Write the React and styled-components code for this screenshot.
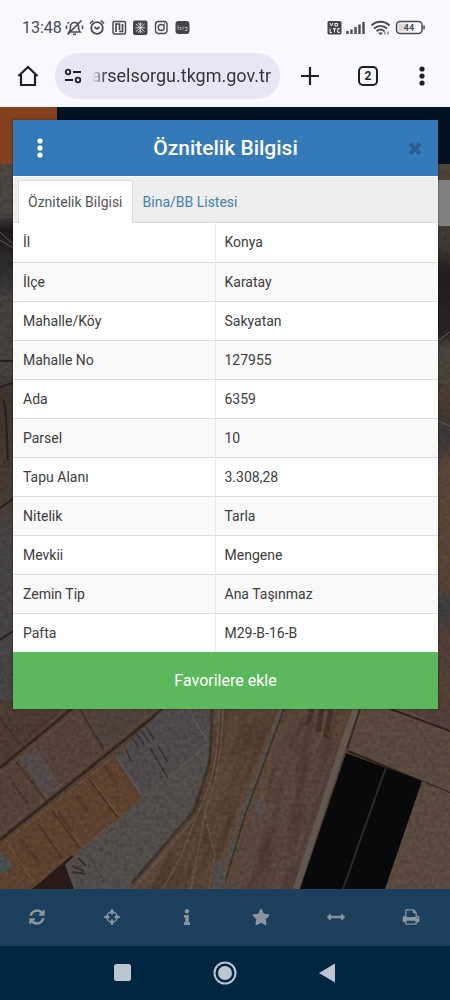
import { useState } from "react";
import styled, { createGlobalStyle } from "styled-components";
import { FaInfo, FaStar } from "react-icons/fa";

const GlobalStyle = createGlobalStyle`
  * {
    box-sizing: border-box;
  }
  body {
    margin: 0;
    font-family: Roboto, "Liberation Sans", sans-serif;
    background: #01263f;
  }
  button,
  input {
    font-family: inherit;
    border: 0;
    padding: 0;
    background: none;
  }
  svg {
    display: block;
    flex-shrink: 0;
  }
`;

const Screen = styled.div`
  min-height: 100vh;
  display: flex;
  flex-direction: column;
`;

const StatusBar = styled.div`
  height: 44px;
  padding: 12px 25px 0 22px;
  display: flex;
  align-items: center;
  justify-content: space-between;
  background: #f9f8fe;
  color: #4a4a50;
  font-size: 16px;
  line-height: 20px;
`;

const StatusGroup = styled.div`
  display: flex;
  align-items: center;
  gap: 2px;
`;

const Clock = styled.span`
  width: 40px;
`;

const BrowserBar = styled.div`
  height: 63px;
  padding: 0 20px 0 16px;
  display: flex;
  align-items: center;
  background: #f9f8fe;
  color: #1f1f24;
`;

const AddressBox = styled.div`
  flex: 1;
  min-width: 0;
  height: 46px;
  margin: 0 18px 0 15px;
  padding: 0 9px;
  display: flex;
  align-items: center;
  gap: 10px;
  border-radius: 23px;
  background: #e7e6f2;
`;

const AddressInput = styled.input`
  flex: 1;
  min-width: 0;
  height: 30px;
  direction: rtl;
  font-size: 18px;
  color: #35353d;
  outline: none;
  mask-image: linear-gradient(to right, transparent 0, #000 14px);
`;

const BarButton = styled.button`
  width: ${({ $size }) => $size || 24}px;
  height: 24px;
  margin-left: ${({ $gap }) => $gap || 0}px;
  flex-shrink: 0;
  display: flex;
  align-items: center;
  justify-content: center;
  color: inherit;
`;

const TabCount = styled.span`
  width: 20px;
  height: 20px;
  border: 2px solid #1f1f24;
  border-radius: 5px;
  font-size: 12px;
  font-weight: 700;
  line-height: 16px;
  text-align: center;
`;

const Stage = styled.main`
  flex: 1;
  display: grid;
  position: relative;
  overflow: hidden;
`;

const Backdrop = styled.div`
  position: absolute;
  inset: 0;
  display: flex;
  flex-direction: column;
`;

const SiteHeader = styled.div`
  height: 57px;
  flex-shrink: 0;
  background: linear-gradient(to right, #82401e 57px, #011322 57px);
`;

const MapDrawing = styled.svg`
  flex: 1;
  width: 100%;
  min-height: 0;
`;

const Dialog = styled.section`
  position: relative;
  align-self: start;
  margin: 13px 12px 180px 13px;
  background: #fff;
  box-shadow: 0 0 2px rgba(0, 0, 0, 0.5);
`;

const DialogHeader = styled.header`
  height: 56px;
  display: grid;
  grid-template-columns: 54px 1fr 54px;
  align-items: center;
  background: #357ab8;
  color: #fff;
`;

const DialogTitle = styled.h1`
  margin: 0;
  font-size: 21px;
  font-weight: 500;
  line-height: 24px;
  text-align: center;
`;

const HeaderButton = styled.button`
  width: 20px;
  height: 32px;
  margin-right: ${({ $dim }) => ($dim ? 13 : 0)}px;
  justify-self: ${({ $dim }) => ($dim ? "end" : "center")};
  display: flex;
  align-items: center;
  justify-content: center;
  color: ${({ $dim }) => ($dim ? "#2b5f8f" : "#fff")};
`;

const Tabs = styled.div`
  height: 47px;
  padding: 3px 5px 0;
  display: flex;
  background: #eee;
  border-top: 1px solid #fff;
  border-bottom: 1px solid #ddd;
`;

const Tab = styled.button`
  height: 43px;
  padding: 0 9px;
  border: 1px solid ${({ $active }) => ($active ? "#ddd" : "transparent")};
  border-bottom: 0;
  background: ${({ $active }) => ($active ? "#fff" : "transparent")};
  color: ${({ $active }) => ($active ? "#555" : "#4280b5")};
  font-size: 14px;
  line-height: 20px;
`;

const InfoTable = styled.table`
  width: 100%;
  border-collapse: collapse;
  table-layout: fixed;
  font-size: 14px;
  line-height: 20px;
  color: #3c3c3c;
  tr {
    height: 39px;
    background: #fff;
    border-bottom: 1px solid #ddd;
  }
  tr:nth-child(even) {
    background: #f9f9f9;
  }
  tr:last-child {
    border-bottom: 0;
  }
  th,
  td {
    padding: 0 9px;
    text-align: left;
    font-weight: 400;
  }
  th {
    width: 202px;
    padding-left: 10px;
    border-right: 1px solid #e8e8e8;
  }
`;

const FavoriteButton = styled.button`
  width: 100%;
  height: 57px;
  display: block;
  background: #5cb85c;
  color: #fff;
  font-size: 16px;
`;

const Toolbar = styled.nav`
  height: 57px;
  padding: 0 2px 2px 0;
  display: grid;
  grid-template-columns: repeat(6, 1fr);
  background: #1c3f5e;
`;

const SystemNav = styled.nav`
  height: 54px;
  padding: 0 16%;
  display: grid;
  grid-template-columns: repeat(3, 1fr);
  background: #01263f;
`;

const IconButton = styled.button`
  display: flex;
  align-items: center;
  justify-content: center;
  color: ${({ $light }) => ($light ? "#bbc6d2" : "#8b959d")};
`;

const rows = [
  ["İl", "Konya"],
  ["İlçe", "Karatay"],
  ["Mahalle/Köy", "Sakyatan"],
  ["Mahalle No", "127955"],
  ["Ada", "6359"],
  ["Parsel", "10"],
  ["Tapu Alanı", "3.308,28"],
  ["Nitelik", "Tarla"],
  ["Mevkii", "Mengene"],
  ["Zemin Tip", "Ana Taşınmaz"],
  ["Pafta", "M29-B-16-B"],
];

const paths = {
  refresh:
    "M1639 1056q0 5-1 7-64 268-268 434.5t-478 166.5q-146 0-282.5-55t-243.5-157l-129 129q-19 19-45 19t-45-19-19-45v-448q0-26 19-45t45-19h448q26 0 45 19t19 45-19 45l-137 137q71 66 161 102t187 36q134 0 250-65t186-179q11-17 53-117 8-23 30-23h192q13 0 22.5 9.5t9.5 22.5zm25-800v448q0 26-19 45t-45 19h-448q-26 0-45-19t-19-45 19-45l138-138q-148-137-349-137-134 0-250 65t-186 179q-11 17-53 117-8 23-30 23h-199q-13 0-22.5-9.5t-9.5-22.5v-7q65-268 270-434.5t480-166.5q146 0 284 55.5t245 156.5l130-129q19-19 45-19t45 19 19 45z",
  crosshairs:
    "M1325 1024h-109q-26 0-45-19t-19-45v-128q0-26 19-45t45-19h109q-32-108-112.5-188.5t-188.5-112.5v109q0 26-19 45t-45 19h-128q-26 0-45-19t-19-45v-109q-108 32-188.5 112.5t-112.5 188.5h109q26 0 45 19t19 45v128q0 26-19 45t-45 19h-109q32 108 112.5 188.5t188.5 112.5v-109q0-26 19-45t45-19h128q26 0 45 19t19 45v109q108-32 188.5-112.5t112.5-188.5zm339-192v128q0 26-19 45t-45 19h-143q-37 161-154.5 278.5t-278.5 154.5v143q0 26-19 45t-45 19h-128q-26 0-45-19t-19-45v-143q-161-37-278.5-154.5t-154.5-278.5h-143q-26 0-45-19t-19-45v-128q0-26 19-45t45-19h143q37-161 154.5-278.5t278.5-154.5v-143q0-26 19-45t45-19h128q26 0 45 19t19 45v143q161 37 278.5 154.5t154.5 278.5h143q26 0 45 19t19 45z",
  arrows:
    "M1792 896q0 26-19 45l-256 256q-19 19-45 19t-45-19-19-45v-128h-1024v128q0 26-19 45t-45 19-45-19l-256-256q-19-19-19-45t19-45l256-256q19-19 45-19t45 19 19 45v128h1024v-128q0-26 19-45t45-19 45 19l256 256q19 19 19 45z",
  print:
    "M448 1536h896v-256h-896v256zm0-640h896v-384h-160q-40 0-68-28t-28-68v-160h-640v640zm1152 64q0-26-19-45t-45-19-45 19-19 45 19 45 45 19 45-19 19-45zm128 0v416q0 13-9.5 22.5t-22.5 9.5h-224v160q0 40-28 68t-68 28h-960q-40 0-68-28t-28-68v-160h-224q-13 0-22.5-9.5t-9.5-22.5v-416q0-79 56.5-135.5t135.5-56.5h64v-544q0-40 28-68t68-28h672q40 0 88 20t76 48l152 152q28 28 48 76t20 88v256h64q79 0 135.5 56.5t56.5 135.5z",
  times:
    "M1490 1322q0 40-28 68l-136 136q-28 28-68 28t-68-28l-294-294-294 294q-28 28-68 28t-68-28l-136-136q-28-28-28-68t28-68l294-294-294-294q-28-28-28-68t28-68l136-136q28-28 68-28t68 28l294 294 294-294q28-28 68-28t68 28l136 136q28 28 28 68t-28 68l-294 294 294 294q28 28 28 68z",
};

function Glyph({ name, size = 18 }) {
  return (
    <svg width={size} height={size} viewBox="0 0 1792 1792" fill="currentColor">
      <path d={paths[name]} />
    </svg>
  );
}

function Dots() {
  return (
    <svg width="6" height="20" viewBox="0 0 6 20" fill="currentColor">
      <circle cx="3" cy="3" r="2.6" />
      <circle cx="3" cy="10" r="2.6" />
      <circle cx="3" cy="17" r="2.6" />
    </svg>
  );
}

function StatusLeftIcons() {
  return (
    <svg width="126" height="18" viewBox="64 19 126 18" fill="none" stroke="#4a4a50">
      {/* muted bell */}
      <path
        d="M69 32h11c-1.500-1.500-1.500-3.500-1.500-5.500a4 4 0 0 0-8 0c0 2 0 4-1.500 5.500zM73 34.300h3M67.500 34.500L81.500 20.500M66.500 25.500v3.500M69 22l-1.500 1.500M82.500 25.500v3.500"
        strokeWidth="1.600"
      />
      {/* alarm */}
      <circle cx="97" cy="28" r="5.800" strokeWidth="1.800" />
      <path d="M94.500 27l2.500 2 2.500-2M90 23.500l3.200-3M104 23.500l-3.200-3" strokeWidth="1.700" />
      {/* nfc */}
      <rect x="113" y="21.500" width="12.500" height="12.500" rx="1.500" strokeWidth="1.500" />
      <path d="M116 32v-8h3.500v6M122.500 24v7.500h-3.500" strokeWidth="1.700" />
      {/* dark app badge */}
      <rect x="133" y="20.500" width="14.500" height="14.500" rx="2" fill="#45454b" stroke="none" />
      <path
        d="M140.250 22.500v10.500M136 24l8.500 7.500M144.500 24l-8.500 7.500M135.500 27.750h9.500M138 23l2.250 2 2.250-2M138 32.500l2.250-2 2.250 2"
        stroke="#e6e5ec"
        strokeWidth="0.900"
      />
      {/* camera */}
      <rect x="155.500" y="21.500" width="11.500" height="12" rx="3" strokeWidth="1.400" />
      <circle cx="161.250" cy="27.500" r="3" strokeWidth="1.400" />
      <circle cx="164.500" cy="24" r="0.700" fill="#4a4a50" stroke="none" />
      {/* label badge */}
      <rect x="175.500" y="21" width="14" height="13" rx="3" fill="#45454b" stroke="none" />
      <path
        d="M178 25.500v4M179.500 27.500h1.500v2h-1.500M183 26.500v3M184.500 27.500h2.500v3h-2"
        stroke="#b9b9c0"
        strokeWidth="0.900"
      />
    </svg>
  );
}

function StatusRightIcons() {
  return (
    <svg width="98" height="18" viewBox="327 19 98 18" fill="none" stroke="#4a4a50">
      <rect x="327.500" y="21" width="14" height="13.500" rx="1.500" fill="#45454b" stroke="none" />
      <path
        d="M330 23l1.500 3 1.500-3M335 23.500h2.500v2.500H335zM330 28.500v4h2M333 28.700h3M334.500 29v3.500M340 28.700h-2.300v3.600h2.300"
        stroke="#f0f0f5"
        strokeWidth="1"
      />
      <path d="M347.500 31v3M351.500 29.500v4.500M355.500 27v7M359.500 24.500v9.500M363.500 22v12" strokeWidth="2.400" />
      <path
        d="M371.500 25.500c5-5 13-5 18 0M374 28.500c4-3.500 9-3.500 13 0M376.500 31.200c2.500-2 5.500-2 8 0"
        strokeWidth="1.900"
      />
      <path d="M378.800 33h3.500l-1.800 1.600zM385 34.500v-3M388 31.500v3" fill="#4a4a50" strokeWidth="1" />
      <rect x="396.500" y="21.500" width="25.500" height="12" rx="3.500" strokeWidth="1.500" />
      <path d="M398.500 23.500h8v8h-8z" fill="#d8d8de" stroke="none" />
      <path d="M424 25.500v4" strokeWidth="1.600" />
      <text
        x="409"
        y="31"
        textAnchor="middle"
        fontSize="9"
        fontWeight="700"
        fill="#4a4a50"
        stroke="none"
      >
        44
      </text>
    </svg>
  );
}

function SatelliteMap() {
  return (
    <MapDrawing viewBox="0 164 450 725" preserveAspectRatio="xMidYMax slice" aria-hidden="true">
      <defs>
        <linearGradient id="leftEdge" x1="0" y1="164" x2="0" y2="709" gradientUnits="userSpaceOnUse">
          <stop offset="0" stopColor="#514a43" />
          <stop offset="0.090" stopColor="#4b4846" />
          <stop offset="0.120" stopColor="#1f1c1d" />
          <stop offset="0.200" stopColor="#333132" />
          <stop offset="0.250" stopColor="#474442" />
          <stop offset="0.380" stopColor="#48443f" />
          <stop offset="0.430" stopColor="#423630" />
          <stop offset="0.620" stopColor="#4c3f38" />
          <stop offset="0.680" stopColor="#494647" />
          <stop offset="1" stopColor="#4b4849" />
        </linearGradient>
        <linearGradient id="rightEdge" x1="0" y1="164" x2="0" y2="709" gradientUnits="userSpaceOnUse">
          <stop offset="0" stopColor="#54483a" />
          <stop offset="0.150" stopColor="#413c35" />
          <stop offset="0.200" stopColor="#261c1f" />
          <stop offset="0.310" stopColor="#2d2224" />
          <stop offset="0.340" stopColor="#4f4941" />
          <stop offset="0.450" stopColor="#493e33" />
          <stop offset="0.500" stopColor="#3d393c" />
          <stop offset="0.560" stopColor="#604a39" />
          <stop offset="0.770" stopColor="#5b4637" />
          <stop offset="0.810" stopColor="#3f4142" />
          <stop offset="0.870" stopColor="#55403a" />
          <stop offset="1" stopColor="#594437" />
        </linearGradient>
        <filter id="soil" x="0" y="0" width="100%" height="100%" colorInterpolationFilters="sRGB">
          <feTurbulence type="fractalNoise" baseFrequency="0.25" numOctaves="3" seed="8" />
          <feColorMatrix values="0 0 0 0 0.08  0 0 0 0 0.05  0 0 0 0 0.04  1.600 0 0 0 -0.500" />
        </filter>
        <filter id="streaks" x="0" y="0" width="100%" height="100%" colorInterpolationFilters="sRGB">
          <feTurbulence type="fractalNoise" baseFrequency="0.09 0.018" numOctaves="3" seed="3" />
          <feColorMatrix values="0 0 0 0 0.230  0 0 0 0 0.130  0 0 0 0 0.090  2.200 0 0 0 -0.850" />
        </filter>
        <clipPath id="plough">
          <path d="M222 700h136l-14 50-45 139h-60l24-80 20-100h-5l-20 52-24 58-24 70h-60l40-75z" />
        </clipPath>
      </defs>
      <rect y="164" width="450" height="725" fill="#584539" />
      <rect y="164" width="20" height="545" fill="url(#leftEdge)" />
      <rect x="430" y="164" width="20" height="545" fill="url(#rightEdge)" />
      <path
        d="M0 238l13 12M0 245l13 9M0 361h13M0 387l13-4M4 400c4 20 2 40 4 60M0 508l13-9M0 640l13-9"
        stroke="#292120"
        strokeWidth="2"
        fill="none"
      />
      <path d="M0 232l13 12M0 240l13 8M436 342l14-10M436 420l14 6" stroke="#625e5d" strokeWidth="1" />

      {/* small fields on the left */}
      <path d="M0 700h72L0 768z" fill="#4f3f35" />
      <path d="M72 709h91L0 838v-70z" fill="#594639" />
      <path d="M80 712l80-3-58 45z" fill="#53463c" />
      <path d="M0 718l20 26M80 710l24 40M15 760l32 42" stroke="#453529" strokeWidth="1.500" />
      <path d="M12 782l16 22M28 735l30-22" stroke="#4b382c" strokeWidth="2" />
      <path d="M20 758l17-9 24 36-15 14z" fill="#55504f" />
      <path d="M0 768l75-62M0 840l163-131" stroke="#38291f" strokeWidth="3" />
      <path d="M0 774l80-66M0 834l152-122" stroke="#66513f" strokeWidth="1" />

      {/* orange brown strip */}
      <path d="M3 843l110-86 29 42L32 889H0v-42z" fill="#624632" />
      <path d="M52 811l30 40M88 778l30 40M38 824l24 34" stroke="#4a3525" strokeWidth="1.500" />
      <path
        d="M8 844l26 38M5 842l107-84M35 886l105-85M56 812l28 36M92 780l27 36"
        stroke="#745740"
        strokeWidth="1"
        fill="none"
      />
      <path d="M20 838l20 26M58 812l14 20M104 766l14 18M76 796l12 16" stroke="#593b2a" strokeWidth="4" />
      <path d="M0 852l14 14-12 8-2-1z" fill="#4c5552" />
      <path d="M32 889l40-34 14 34z" fill="#2c1c19" />

      {/* grey plots */}
      <path d="M163 709h50l-8 38-63 52-27-42z" fill="#534e4f" />
      <path d="M213 706l-3 55-16 50-67 78H74l-9-24 17-17 62-50 60-50z" fill="#56524f" />
      <path d="M116 757l26 38M142 798l62-50M192 716l14 24" stroke="#6c6461" strokeWidth="1" />
      <path
        d="M131 736l8 12M136 733l8 12M141 730l8 12M146 727l8 12M126 750l6 12M150 748l18 30M158 746l10 16"
        stroke="#3a3534"
        strokeWidth="1.500"
      />
      <path d="M72 866l12 5M78 858l8 8M72 872l14 2" stroke="#38332f" strokeWidth="2" />
      <path d="M88 852l16 30" stroke="#47423f" strokeWidth="1" />
      <path d="M212 706l-2 55-16 50-62 72" stroke="#40392f" strokeWidth="3" fill="none" />

      {/* ploughed land in the middle */}
      <path d="M216 700h142l-14 50-45 139H130l66-76 15-50z" fill="#5f4b3c" />
      <path d="M285 720l55 28-45 141h-67z" fill="#5e4c41" />
      <g clipPath="url(#plough)">
        <g transform="rotate(20 280 800)">
          <rect x="120" y="640" width="320" height="320" filter="url(#streaks)" opacity="0.400" />
        </g>
      </g>
      <path d="M313 706l-6 20M332 706l-7 32M322 706l-4 26" stroke="#4a3329" strokeWidth="5" />
      <path
        d="M219 706c-1 34-2 66-18 100l-20 50-18 33M223 706c0 36-4 70-18 106l-14 77M196 816l-62 73M205 815l10 40-6 34"
        stroke="#6d5646"
        strokeWidth="1.500"
        fill="none"
      />
      <path d="M283 706l-20 53-22 58-22 72" stroke="#58524a" strokeWidth="6" fill="none" />
      <path d="M285 706l-18 49-22 60-22 74" stroke="#35342b" strokeWidth="1.500" fill="none" />
      <path d="M256 798l8-6 4 20-14 5z" fill="#5b5250" />
      <path d="M211 866l14-8v31h-12z" fill="#56524e" />

      {/* tan fields on the right */}
      <path d="M358 700h92v95l-102-44z" fill="#5e4e40" />
      <path d="M388 700h62v32z" fill="#55433a" />
      <path d="M388 708l62 23M348 751l102 42" stroke="#30231d" strokeWidth="2" />
      <path d="M421 781l29 12v96h-65z" fill="#5f4e42" />
      <rect y="164" width="450" height="725" filter="url(#soil)" opacity="0.250" />

      {/* black plots with the road beside them */}
      <path d="M346 753l76 28-37 108h-85z" fill="#08090b" />
      <path d="M386 767l-43 122" stroke="#2e2824" strokeWidth="2" />
      <path d="M357 706l-16 46-45 137" stroke="#62574f" strokeWidth="6" fill="none" />
      <path d="M361 706l-14 43" stroke="#352a24" strokeWidth="2" />
      <path d="M352 706l-17 47-47 136" stroke="#4b3e34" strokeWidth="1" fill="none" />
      <rect x="430" y="180" width="20" height="46" fill="#808080" />
    </MapDrawing>
  );
}

export default function App() {
  const [tab, setTab] = useState("info");

  return (
    <Screen>
      <GlobalStyle />
      <StatusBar>
        <StatusGroup>
          <Clock>13:48</Clock>
          <StatusLeftIcons />
        </StatusGroup>
        <StatusRightIcons />
      </StatusBar>
      <BrowserBar>
        <BarButton aria-label="Ana sayfa">
          <svg width="24" height="24" viewBox="0 0 24 24" fill="none" stroke="currentColor">
            <path d="M2.500 12L12 3l9.500 9M5 10v11h14V10" strokeWidth="2.200" />
          </svg>
        </BarButton>
        <AddressBox>
          <svg width="18" height="16" viewBox="0 0 18 16" fill="none" stroke="currentColor">
            <circle cx="4" cy="4" r="2.300" strokeWidth="1.800" />
            <circle cx="14" cy="12" r="2.300" strokeWidth="1.800" />
            <path d="M9 4h8M1 12h8" strokeWidth="1.800" />
          </svg>
          <AddressInput aria-label="Adres" defaultValue="arselsorgu.tkgm.gov.tr" />
        </AddressBox>
        <BarButton aria-label="Yeni sekme">
          <svg width="20" height="20" viewBox="0 0 20 20" stroke="currentColor">
            <path d="M10 1v18M1 10h18" strokeWidth="2.200" />
          </svg>
        </BarButton>
        <BarButton $gap={34} aria-label="Sekmeler">
          <TabCount>2</TabCount>
        </BarButton>
        <BarButton $gap={34} $size={16} aria-label="Menü">
          <Dots />
        </BarButton>
      </BrowserBar>

      <Stage>
        <Backdrop>
          <SiteHeader />
          <SatelliteMap />
        </Backdrop>
        <Dialog role="dialog" aria-labelledby="dialog-title">
          <DialogHeader>
            <HeaderButton aria-label="Seçenekler">
              <Dots />
            </HeaderButton>
            <DialogTitle id="dialog-title">Öznitelik Bilgisi</DialogTitle>
            <HeaderButton $dim aria-label="Kapat">
              <Glyph name="times" />
            </HeaderButton>
          </DialogHeader>
          <Tabs role="tablist">
            <Tab role="tab" $active={tab === "info"} onClick={() => setTab("info")}>
              Öznitelik Bilgisi
            </Tab>
            <Tab role="tab" $active={tab === "list"} onClick={() => setTab("list")}>
              Bina/BB Listesi
            </Tab>
          </Tabs>
          <InfoTable>
            <tbody>
              {rows.map(([label, value]) => (
                <tr key={label}>
                  <th scope="row">{label}</th>
                  <td>{value}</td>
                </tr>
              ))}
            </tbody>
          </InfoTable>
          <FavoriteButton>Favorilere ekle</FavoriteButton>
        </Dialog>
      </Stage>

      <Toolbar>
        <IconButton aria-label="Yenile">
          <Glyph name="refresh" />
        </IconButton>
        <IconButton aria-label="Konum">
          <Glyph name="crosshairs" />
        </IconButton>
        <IconButton aria-label="Bilgi">
          <FaInfo size={16} />
        </IconButton>
        <IconButton aria-label="Favoriler">
          <FaStar size={18} />
        </IconButton>
        <IconButton aria-label="Ölç">
          <Glyph name="arrows" />
        </IconButton>
        <IconButton aria-label="Yazdır">
          <Glyph name="print" />
        </IconButton>
      </Toolbar>
      <SystemNav>
        <IconButton $light aria-label="Son uygulamalar">
          <svg width="18" height="18" fill="currentColor">
            <rect width="17" height="17" rx="2.500" />
          </svg>
        </IconButton>
        <IconButton $light aria-label="Ana ekran">
          <svg width="24" height="24" fill="none" stroke="currentColor">
            <circle cx="12" cy="12" r="10.500" strokeWidth="2" />
            <circle cx="12" cy="12" r="7" fill="currentColor" stroke="none" />
          </svg>
        </IconButton>
        <IconButton $light aria-label="Geri">
          <svg width="18" height="20" fill="currentColor">
            <path d="M1 10L17 0.500v19z" />
          </svg>
        </IconButton>
      </SystemNav>
    </Screen>
  );
}
